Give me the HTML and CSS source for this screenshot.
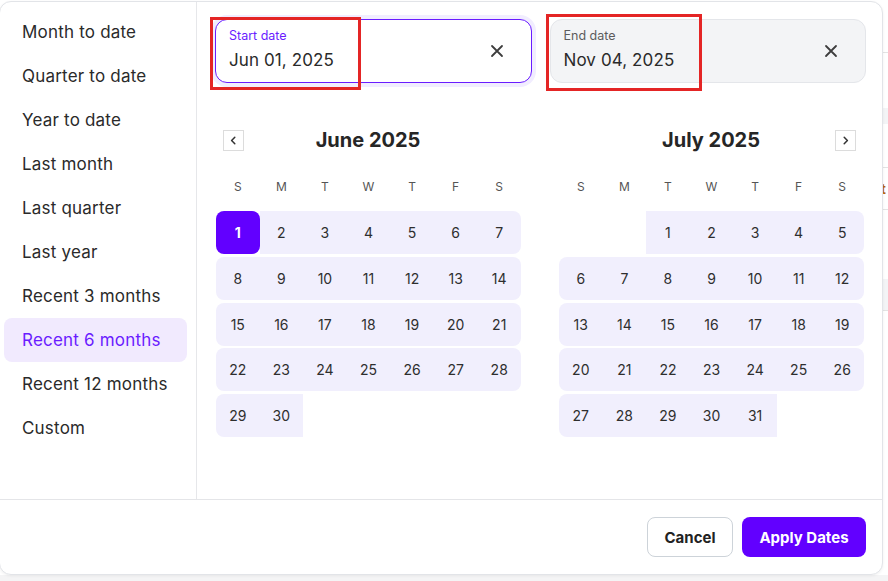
FILE: index.html
```html
<!DOCTYPE html>
<html lang="en">
<head>
<meta charset="utf-8">
<title>Date range picker</title>
<link rel="stylesheet" href="styles.css">
</head>
<body>
<div class="page">
  <div class="pg-row pg-top"></div>
  <div class="pg-row pg-gap1"></div>
  <div class="pg-row pg-band"></div>
  <div class="pg-row pg-gap2"></div>
  <div class="pg-row pg-text"><span class="pg-t">t</span></div>
  <div class="pg-row pg-gap3"></div>
  <div class="pg-row pg-band2"></div>
  <div class="pg-row pg-rest"></div>
</div>

<div class="popover">
  <div class="pop-body">
    <aside class="presets">
      <div class="preset">Month to date</div>
      <div class="preset">Quarter to date</div>
      <div class="preset">Year to date</div>
      <div class="preset">Last month</div>
      <div class="preset">Last quarter</div>
      <div class="preset">Last year</div>
      <div class="preset">Recent 3 months</div>
      <div class="preset is-active">Recent 6 months</div>
      <div class="preset">Recent 12 months</div>
      <div class="preset">Custom</div>
    </aside>

    <section class="main">
      <div class="inputs">
        <div class="field is-focused">
          <div class="field-text">
            <span class="field-label">Start date</span>
            <span class="field-value">Jun 01, 2025</span>
          </div>
          <span class="clear"><svg width="14" height="14" viewBox="0 0 14 14"><path d="M2 2 L12 12 M12 2 L2 12" stroke="#3d3d3d" stroke-width="1.8" stroke-linecap="round" fill="none"/></svg></span>
        </div>
        <div class="field is-filled">
          <div class="field-text">
            <span class="field-label">End date</span>
            <span class="field-value">Nov 04, 2025</span>
          </div>
          <span class="clear"><svg width="14" height="14" viewBox="0 0 14 14"><path d="M2 2 L12 12 M12 2 L2 12" stroke="#3d3d3d" stroke-width="1.8" stroke-linecap="round" fill="none"/></svg></span>
        </div>
      </div>

      <div class="calendars">
        <div class="month">
          <div class="month-head">
            <span class="nav"><svg width="9" height="9" viewBox="0 0 9 9"><path d="M5.8 1.2 L2.6 4.5 L5.8 7.8" stroke="#333" stroke-width="1.5" fill="none" stroke-linecap="round" stroke-linejoin="round"/></svg></span>
            <h3 class="month-title">June 2025</h3>
            <span class="nav-spacer"></span>
          </div>
          <div class="weekdays"><span>S</span><span>M</span><span>T</span><span>W</span><span>T</span><span>F</span><span>S</span></div>
          <div class="weeks">
            <div class="week">
              <span class="day in first sel">1</span><span class="day in">2</span><span class="day in">3</span><span class="day in">4</span><span class="day in">5</span><span class="day in">6</span><span class="day in last">7</span>
            </div>
            <div class="week">
              <span class="day in first">8</span><span class="day in">9</span><span class="day in">10</span><span class="day in">11</span><span class="day in">12</span><span class="day in">13</span><span class="day in last">14</span>
            </div>
            <div class="week">
              <span class="day in first">15</span><span class="day in">16</span><span class="day in">17</span><span class="day in">18</span><span class="day in">19</span><span class="day in">20</span><span class="day in last">21</span>
            </div>
            <div class="week">
              <span class="day in first">22</span><span class="day in">23</span><span class="day in">24</span><span class="day in">25</span><span class="day in">26</span><span class="day in">27</span><span class="day in last">28</span>
            </div>
            <div class="week">
              <span class="day in first">29</span><span class="day in">30</span><span class="day"></span><span class="day"></span><span class="day"></span><span class="day"></span><span class="day"></span>
            </div>
          </div>
        </div>

        <div class="month">
          <div class="month-head">
            <span class="nav-spacer"></span>
            <h3 class="month-title">July 2025</h3>
            <span class="nav"><svg width="9" height="9" viewBox="0 0 9 9"><path d="M3.2 1.2 L6.4 4.5 L3.2 7.8" stroke="#333" stroke-width="1.5" fill="none" stroke-linecap="round" stroke-linejoin="round"/></svg></span>
          </div>
          <div class="weekdays"><span>S</span><span>M</span><span>T</span><span>W</span><span>T</span><span>F</span><span>S</span></div>
          <div class="weeks">
            <div class="week">
              <span class="day"></span><span class="day"></span><span class="day in">1</span><span class="day in">2</span><span class="day in">3</span><span class="day in">4</span><span class="day in last">5</span>
            </div>
            <div class="week">
              <span class="day in first">6</span><span class="day in">7</span><span class="day in">8</span><span class="day in">9</span><span class="day in">10</span><span class="day in">11</span><span class="day in last">12</span>
            </div>
            <div class="week">
              <span class="day in first">13</span><span class="day in">14</span><span class="day in">15</span><span class="day in">16</span><span class="day in">17</span><span class="day in">18</span><span class="day in last">19</span>
            </div>
            <div class="week">
              <span class="day in first">20</span><span class="day in">21</span><span class="day in">22</span><span class="day in">23</span><span class="day in">24</span><span class="day in">25</span><span class="day in last">26</span>
            </div>
            <div class="week">
              <span class="day in first">27</span><span class="day in">28</span><span class="day in">29</span><span class="day in">30</span><span class="day in">31</span><span class="day"></span><span class="day"></span>
            </div>
          </div>
        </div>
      </div>
    </section>
  </div>

  <footer class="pop-foot">
    <button class="btn btn-cancel">Cancel</button>
    <button class="btn btn-apply">Apply Dates</button>
  </footer>
</div>

<div class="mark mark-start"></div>
<div class="mark mark-end"></div>
</body>
</html>
```

FILE: styles.css
```css
* { box-sizing: border-box; }

body {
  margin: 0;
  width: 888px;
  height: 581px;
  overflow: hidden;
  position: relative;
  background: #ffffff;
  font-family: Inter, "Noto Sans", sans-serif;
  color: #2b2b2b;
}

/* background page peeking on the right */
.page { display: flex; flex-direction: column; height: 581px; }
.pg-row { width: 100%; }
.pg-top { height: 53px; border-bottom: 1px solid #e3e3e3; }
.pg-gap1 { height: 55px; }
.pg-band { height: 16px; background: #f3f4f6; }
.pg-gap2 { height: 44px; border-bottom: 1px solid #e3e3e3; }
.pg-text { height: 42px; border-bottom: 1px solid #e3e3e3; display: flex; justify-content: flex-end; align-items: center; }
.pg-t { font-size: 14px; font-weight: 700; color: #b8650f; padding-right: 2px; }
.pg-gap3 { height: 69px; }
.pg-band2 { height: 32px; background: #f3f4f6; border-bottom: 1px solid #e3e3e3; }
.pg-rest { flex: 1; background: linear-gradient(#fff 0, #fff 264px, #f4f4f5 264px); }

/* popover card */
.popover {
  position: absolute;
  left: -1px;
  top: 1px;
  width: 884px;
  height: 574px;
  background: #fff;
  border: 1px solid #e2e4e8;
  border-radius: 12px;
  box-shadow: 0 1px 3px rgba(0, 0, 0, 0.06);
  display: flex;
  flex-direction: column;
}

.pop-body { flex: 1; display: flex; min-height: 0; }

.presets {
  width: 197px;
  flex: none;
  border-right: 1px solid #e6e7ea;
  padding: 8px 9px 0 4px;
}

.preset {
  height: 44px;
  display: flex;
  align-items: center;
  padding-left: 18px;
  font-size: 17px;
  letter-spacing: 0.2px;
  color: #2a2a2a;
  border-radius: 8px;
}
.preset.is-active { background: #f1eafe; color: #6a1cff; }

.main {
  flex: 1;
  padding: 17px 16px 0 18px;
}

.inputs {
  display: grid;
  grid-template-columns: 1fr 1fr;
  gap: 18px;
}

.field {
  height: 64px;
  border-radius: 12px;
  display: flex;
  align-items: center;
  justify-content: space-between;
  padding: 0 27px 0 13px;
}
.field.is-focused {
  border: 1px solid #6a1cff;
  box-shadow: 0 0 0 4px #f1edff;
  background: #fff;
}
.field.is-filled {
  border: 1px solid #e4e6ea;
  background: #f3f4f6;
}
.field-text { display: flex; flex-direction: column; gap: 5px; padding-bottom: 4px; }
.field-label { font-size: 12.5px; color: #5c5c5c; line-height: 16px; }
.is-focused .field-label { color: #6a1cff; }
.field-value { font-size: 17px; letter-spacing: 0.1px; color: #2a2a2a; line-height: 22px; }
.clear { display: flex; width: 14px; height: 14px; }

.calendars {
  display: grid;
  grid-template-columns: 305px 305px;
  gap: 38px;
  margin: 46px 0 0 1px;
}

.month-head {
  display: grid;
  grid-template-columns: 21px 1fr 21px;
  align-items: center;
  height: 22px;
  padding: 0 8px 0 7px;
}
.nav, .nav-spacer { width: 21px; height: 21px; }
.nav {
  border: 1px solid #dcdcdc;
  display: flex;
  align-items: center;
  justify-content: center;
}
.month-title {
  margin: 0;
  text-align: center;
  font-size: 20px;
  font-weight: 700;
  color: #262626;
  line-height: 22px;
}

.weekdays {
  display: grid;
  grid-template-columns: repeat(7, 1fr);
  margin-top: 25px;
  height: 20px;
  align-items: center;
  text-align: center;
  font-size: 12px;
  color: #555;
}

.weeks {
  margin-top: 15px;
  display: flex;
  flex-direction: column;
  gap: 2.8px;
}
.week {
  display: grid;
  grid-template-columns: repeat(7, 1fr);
  height: 43px;
}
.day {
  display: flex;
  align-items: center;
  justify-content: center;
  font-size: 14px;
  color: #2e2e2e;
}
.day.in { background: #f1effd; }
.day.first { border-radius: 8px 0 0 8px; }
.day.last { border-radius: 0 8px 8px 0; }
.day.sel {
  background: #6200ff;
  color: #fff;
  font-weight: 700;
  border-radius: 8px;
}

.pop-foot {
  height: 75px;
  flex: none;
  border-top: 1px solid #e4e5e8;
  display: flex;
  justify-content: flex-end;
  align-items: center;
  gap: 9px;
  padding: 0 16px 0 0;
}
.btn {
  height: 40px;
  border-radius: 8px;
  font-family: Inter, "Noto Sans", sans-serif;
  font-size: 15px;
  font-weight: 700;
}
.btn-cancel {
  width: 86px;
  background: #fff;
  border: 1px solid #cdd3d9;
  color: #222;
}
.btn-apply {
  width: 124px;
  background: #6200ff;
  border: none;
  color: #fff;
}

/* red annotation boxes over the screenshot */
.mark {
  position: absolute;
  border: 3px solid #e42525;
}
.mark-start { left: 210px; top: 17px; width: 151px; height: 73px; }
.mark-end { left: 546px; top: 14px; width: 156px; height: 77px; }
```
